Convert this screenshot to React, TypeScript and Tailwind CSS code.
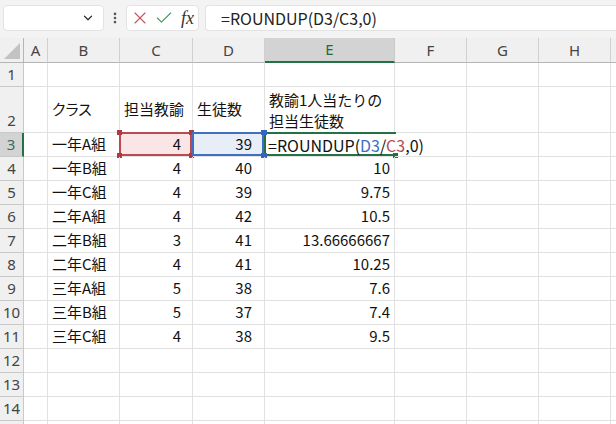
import { X, Check, ChevronDown, EllipsisVertical } from "lucide-react";

const COLS = ["A", "B", "C", "D", "E", "F", "G", "H", "I"];

// 3行目以降のデータ (3行目は数式入力中)
const DATA: [string, string, string, string][] = [
  ["一年A組", "4", "39", ""],
  ["一年B組", "4", "40", "10"],
  ["一年C組", "4", "39", "9.75"],
  ["二年A組", "4", "42", "10.5"],
  ["二年B組", "3", "41", "13.66666667"],
  ["二年C組", "4", "41", "10.25"],
  ["三年A組", "5", "38", "7.6"],
  ["三年B組", "5", "37", "7.4"],
  ["三年C組", "4", "38", "9.5"],
];

const CELL = "relative flex items-center border-r border-b border-[#e1e1e1] whitespace-nowrap";
const ROWHEAD =
  "flex items-center justify-center border-r border-b border-[#c9c9c9] bg-[#f0f0f0] text-[15px] text-[#444]";

function Handle({ pos, color }: { pos: string; color: string }) {
  return <div className={`absolute h-[5px] w-[5px] ${pos} ${color}`} />;
}

function TopBar() {
  return (
    <div className="flex h-[38px] items-start bg-[#f3f3f3] pt-[5px]">
      <div className="ml-[3px] flex h-[26px] w-[101px] items-center justify-end rounded-[4px] border border-[#e3e3e3] bg-white pr-[8px]">
        <ChevronDown size={14} strokeWidth={2.2} className="text-[#333]" />
      </div>
      <div className="flex h-[26px] w-[22px] items-center justify-center">
        <EllipsisVertical size={14} strokeWidth={2.5} className="text-[#555]" />
      </div>
      <div className="flex h-[26px] w-[73px] items-center rounded-[4px] border border-[#e3e3e3] bg-white pl-[3px]">
        <X size={20} strokeWidth={1.3} className="text-[#c8545a]" />
        <Check size={20} strokeWidth={1.3} className="ml-[4px] text-[#3e9a5c]" />
        <span className="ml-[7px] font-['Liberation_Serif',serif] text-[18px] italic leading-none text-[#333]">
          fx
        </span>
      </div>
      <div className="ml-[6px] flex h-[26px] flex-1 items-center rounded-l-[4px] border border-r-0 border-[#e3e3e3] bg-white pl-[15px] font-['Noto_Sans_CJK_JP',sans-serif] text-[16px] text-[#222]">
        =ROUNDUP(D3/C3,0)
      </div>
    </div>
  );
}

export default function App() {
  return (
    <div className="h-[424px] w-[616px] overflow-hidden bg-white font-['Noto_Sans_CJK_JP',sans-serif] text-[15px] text-[#111]">
      <TopBar />
      <div className="grid grid-cols-[24px_24px_72px_73px_72px_130px_72px_72px_72px_72px] grid-rows-[25px_24px_46px_repeat(13,24px)]">
        {/* 左上の全選択ボタン */}
        <div className="relative border-r border-b border-[#b5b5b5] bg-[#f0f0f0]">
          <svg className="absolute bottom-[3px] right-[3px]" width="16" height="16" viewBox="0 0 16 16">
            <polygon points="16,0 16,16 0,16" fill="#c2c2c2" />
          </svg>
        </div>
        {COLS.map((c) =>
          c === "E" ? (
            <div
              key={c}
              className="flex items-center justify-center border-r border-b-2 border-r-[#c9c9c9] border-b-[#217346] bg-[#d3d3d3] font-['Noto_Sans',sans-serif] text-[15px] text-[#1d6b3e]"
            >
              {c}
            </div>
          ) : (
            <div
              key={c}
              className="flex items-center justify-center border-r border-b border-r-[#d0d0d0] border-b-[#b5b5b5] bg-[#f0f0f0] font-['Noto_Sans',sans-serif] text-[15px] text-[#444]"
            >
              {c === "I" ? "" : c}
            </div>
          ),
        )}

        {/* 1行目 */}
        <div className={`${ROWHEAD} font-['Noto_Sans',sans-serif]`}>1</div>
        {COLS.map((c) => (
          <div key={c} className={CELL} />
        ))}

        {/* 2行目 見出し */}
        <div className={`${ROWHEAD} items-end pb-[1px] font-['Noto_Sans',sans-serif]`}>2</div>
        <div className={CELL} />
        <div className={`${CELL} pl-[4px]`}>
          <span className="[font-feature-settings:'palt']">クラス</span>
        </div>
        <div className={`${CELL} pl-[4px]`}>担当教諭</div>
        <div className={`${CELL} pl-[4px]`}>生徒数</div>
        <div className={`${CELL} flex-col !items-start justify-center pl-[4px] leading-[21px]`}>
          <span>教諭1人当たりの</span>
          <span>担当生徒数</span>
        </div>
        {COLS.slice(5).map((c) => (
          <div key={c} className={CELL} />
        ))}

        {DATA.map(([cls, t, s, r], i) => {
          const row = i + 3;
          const active = row === 3;
          return [
            <div
              key={`h${row}`}
              className={
                active
                  ? "flex items-center justify-center border-r-2 border-b border-r-[#217346] border-b-[#c9c9c9] bg-[#d3d3d3] font-['Noto_Sans',sans-serif] text-[15px] text-[#3f6b53]"
                  : `${ROWHEAD} font-['Noto_Sans',sans-serif]`
              }
            >
              {row}
            </div>,
            <div key={`a${row}`} className={CELL} />,
            <div key={`b${row}`} className={`${CELL} pl-[4px]`}>
              {cls}
            </div>,
            <div
              key={`c${row}`}
              className={`${CELL} justify-end pr-[11px] ${active ? "bg-[#fbe6e7]" : ""}`}
            >
              {t}
              {active && (
                <>
                  <div className="absolute -left-px -top-px bottom-0 right-0 border-2 border-[#b94a50]" />
                  <Handle pos="-left-[3px] -top-[3px]" color="bg-[#b03a41]" />
                  <Handle pos="-right-[2px] -top-[3px]" color="bg-[#b03a41]" />
                  <Handle pos="-left-[3px] -bottom-[2px]" color="bg-[#b03a41]" />
                  <Handle pos="-right-[2px] -bottom-[2px]" color="bg-[#b03a41]" />
                </>
              )}
            </div>,
            <div
              key={`d${row}`}
              className={`${CELL} justify-end pr-[12px] ${active ? "bg-[#e8eef8]" : ""}`}
            >
              {s}
              {active && (
                <>
                  <div className="absolute -left-px -top-px bottom-0 right-0 border-2 border-[#3f6fc1]" />
                  <Handle pos="-right-[2px] -top-[3px]" color="bg-[#3566be]" />
                  <Handle pos="-right-[2px] -bottom-[2px]" color="bg-[#3566be]" />
                </>
              )}
            </div>,
            active ? (
              <div
                key={`e${row}`}
                className="relative flex items-center border-b border-[#e1e1e1] pl-[3px] text-[16px] whitespace-nowrap"
              >
                <div className="absolute -left-px -top-px -right-px bottom-0 border-2 border-r-0 border-[#217346]" />
                <Handle pos="-left-[3px] -top-[3px]" color="bg-[#3566be]" />
                <Handle pos="-left-[3px] -bottom-[2px]" color="bg-[#3566be]" />
                <Handle pos="-right-[3px] -bottom-[2px]" color="bg-[#217346]" />
                <span className="relative">
                  =ROUNDUP(<span className="text-[#3f6fc1]">D3</span>/
                  <span className="text-[#b94a50]">C3</span>,0)
                </span>
                <span className="relative ml-[2px] inline-block h-[18px] w-px bg-black" />
              </div>
            ) : (
              <div key={`e${row}`} className={`${CELL} justify-end pr-[4px]`}>
                {r}
              </div>
            ),
            ...COLS.slice(5).map((c) => (
              <div key={`${c}${row}`} className={CELL} />
            )),
          ];
        })}

        {[12, 13, 14, 15].map((row) => [
          <div key={`h${row}`} className={`${ROWHEAD} font-['Noto_Sans',sans-serif]`}>
            {row === 15 ? "" : row}
          </div>,
          ...COLS.map((c) => <div key={`${c}${row}`} className={CELL} />),
        ])}
      </div>
    </div>
  );
}
